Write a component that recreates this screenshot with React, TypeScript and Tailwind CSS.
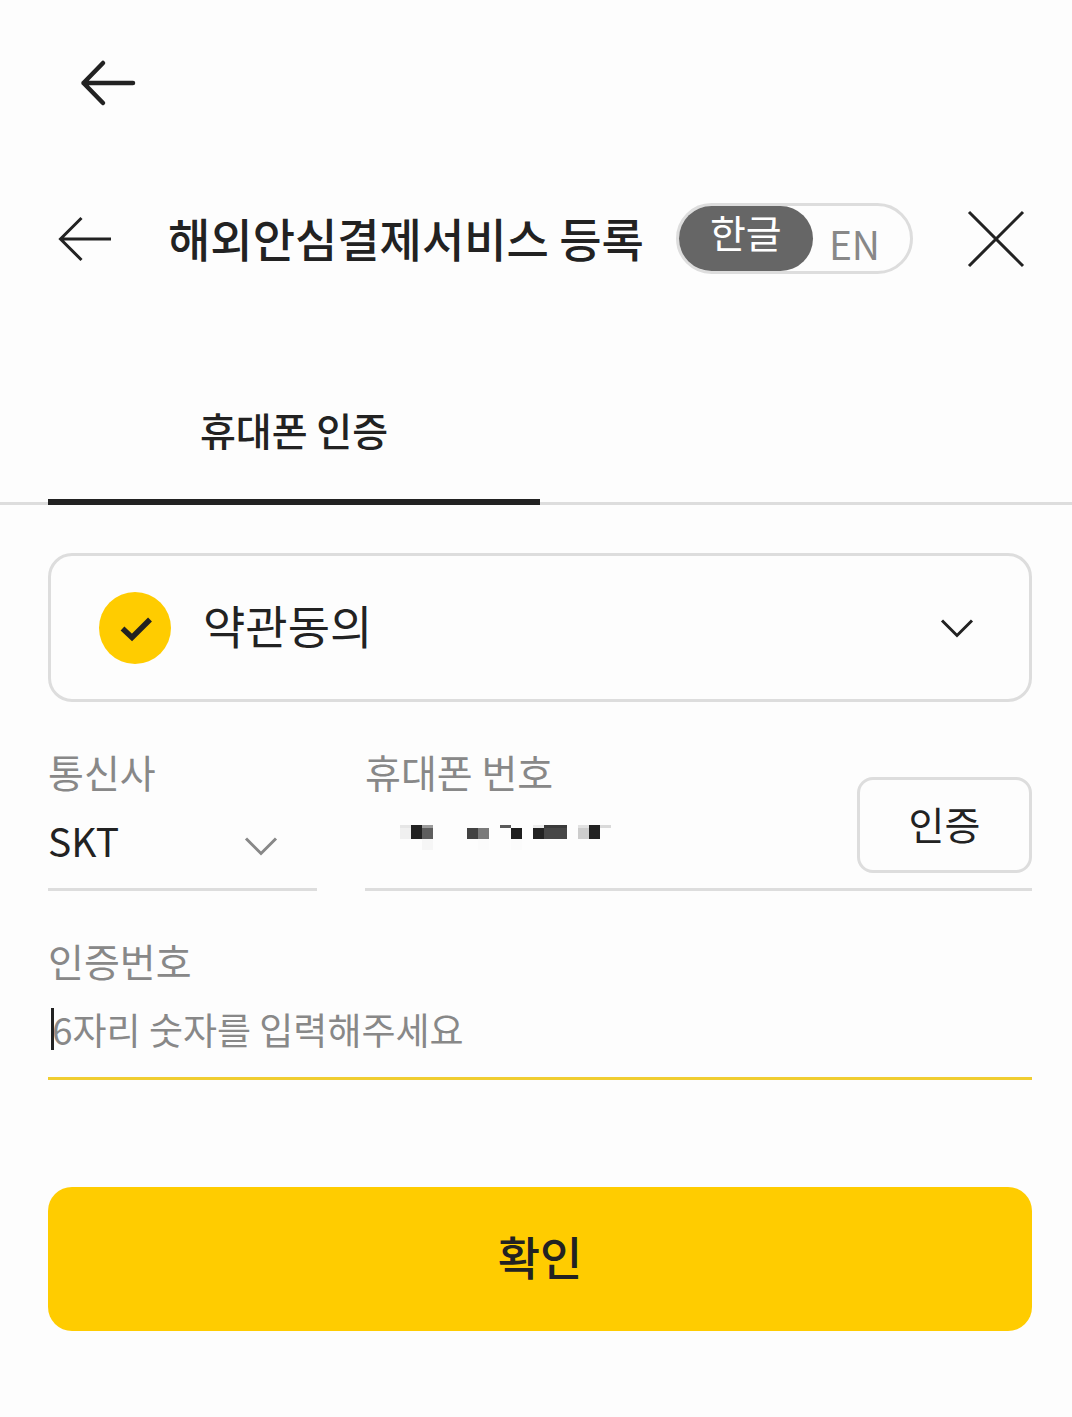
import { useState } from 'react'
import type { ReactNode } from 'react'

// hidden phone digits: x, y, width, height, colour
const MOSAIC: [number, number, number, number, string][] = [
    [0, 0, 11, 3, '#e6e6e6'],
    [0, 3, 11, 11, '#f0f0f0'],
    [11, 0, 11, 14, '#222222'],
    [22, 0, 11, 3, '#9c9c9c'],
    [22, 3, 11, 11, '#5e5e5e'],
    [22, 14, 11, 11, '#f6f6f6'],
    [67, 3, 11, 11, '#424242'],
    [78, 3, 11, 11, '#7a7a7a'],
    [78, 14, 11, 11, '#fbfbfb'],
    [100, 0, 11, 3, '#5a5a5a'],
    [111, 3, 11, 11, '#1e1e1e'],
    [111, 14, 11, 11, '#fbfbfb'],
    [133, 0, 11, 3, '#ececec'],
    [133, 3, 11, 11, '#222222'],
    [144, 0, 23, 3, '#3a3a3a'],
    [144, 3, 23, 11, '#464646'],
    [178, 0, 11, 3, '#e2e2e2'],
    [178, 3, 11, 11, '#cdcdcd'],
    [189, 0, 11, 14, '#222222'],
    [200, 0, 11, 3, '#dadada'],
]

function Chevron({ className }: { className: string }) {
    return (
        <svg viewBox="0 0 48 48" fill="none" stroke="currentColor" strokeWidth="3" className={className} aria-hidden="true">
            <path d="M9 16.5 24 31.5 39 16.5" />
        </svg>
    )
}

function Field({ id, label, children }: { id: string; label: string; children: ReactNode }) {
    return (
        <div className="relative flex flex-col w-full">
            <label htmlFor={id} className="h-12 text-[39px] leading-11 text-[#888888]">
                {label}
            </label>
            {children}
        </div>
    )
}

export default function App() {
    const [lang, setLang] = useState('ko')
    const [carrier, setCarrier] = useState('SKT')
    const [code, setCode] = useState('')

    return (
        <div className="w-full min-h-screen bg-[#fdfdfd] text-[#222222] font-['Noto_Sans_CJK_KR',sans-serif]">
            <nav className="flex items-center h-[166px] pl-19">
                <button type="button" aria-label="뒤로">
                    <svg viewBox="0 0 64 64" fill="none" stroke="currentColor" strokeWidth="4.5" strokeLinecap="round" strokeLinejoin="round" className="size-16">
                        <path d="M27 12 7.500 32 27 52M7.500 32H57" />
                    </svg>
                </button>
            </nav>

            <header className="flex items-center h-[145px] pl-14 pr-11">
                <button type="button" aria-label="이전">
                    <svg viewBox="0 0 56 56" fill="none" stroke="currentColor" strokeWidth="3" className="size-14">
                        <path d="M25.500 7 4.500 28 25.500 49M4.500 28H55" />
                    </svg>
                </button>
                <h1 className="ml-14 pb-1 text-[46px] leading-16 font-medium whitespace-nowrap">해외안심결제서비스 등록</h1>
                <div className="flex ml-8 h-[71px] w-[237px] shrink-0 rounded-full border-3 border-[#dddddd] text-[39px] leading-12">
                    <button
                        type="button"
                        aria-pressed={lang === 'ko'}
                        onClick={() => setLang('ko')}
                        className="w-[134px] rounded-full bg-[#666666] pb-4 text-white"
                    >
                        한글
                    </button>
                    <button
                        type="button"
                        aria-pressed={lang === 'en'}
                        onClick={() => setLang('en')}
                        className="px-4 pt-2 text-[#888888]"
                    >
                        EN
                    </button>
                </div>
                <button type="button" aria-label="닫기" className="ml-auto">
                    <svg viewBox="0 0 64 64" fill="none" stroke="currentColor" strokeWidth="3" className="size-16">
                        <path d="M5 5 59 59M59 5 5 59" />
                    </svg>
                </button>
            </header>

            <div role="tablist" className="flex mt-12 h-[146px] pl-12 pr-10 shadow-[inset_0_-3px_0_#dddddd]">
                <button
                    type="button"
                    role="tab"
                    aria-selected="true"
                    className="w-1/2 border-b-6 border-[#222222] text-[39px] leading-12 font-medium"
                >
                    휴대폰 인증
                </button>
            </div>

            <form className="flex flex-col gap-[47px] mt-12 pl-12 pr-10" onSubmit={(e) => e.preventDefault()}>
                <button type="button" className="flex items-center h-[149px] px-12 rounded-3xl border-3 border-[#dddddd]">
                    <svg viewBox="0 0 72 72" className="size-18" aria-hidden="true">
                        <circle cx="36" cy="36" r="36" fill="#ffcc00" />
                        <path d="M23.500 36.500 33 45.500 51 27.500" fill="none" stroke="#222222" strokeWidth="5.500" />
                    </svg>
                    <span className="ml-8 pb-2 text-[46px] leading-16">약관동의</span>
                    <Chevron className="size-12 ml-auto" />
                </button>

                <div className="grid grid-cols-[269px_1fr] gap-12">
                    <div className="border-b-3 border-[#dddddd]">
                        <Field id="carrier" label="통신사">
                            <select
                                id="carrier"
                                value={carrier}
                                onChange={(e) => setCarrier(e.target.value)}
                                className="w-full h-[91px] pb-1.5 appearance-none bg-transparent text-[39px] leading-12 outline-none"
                            >
                                <option>SKT</option>
                                <option>KT</option>
                                <option>LG U+</option>
                            </select>
                            <Chevron className="absolute right-8 bottom-[18px] size-12 text-[#888888] pointer-events-none" />
                        </Field>
                    </div>
                    <div className="flex items-end border-b-3 border-[#dddddd]">
                        <Field id="phone" label="휴대폰 번호">
                            <input id="phone" type="tel" className="w-full h-[91px] pb-1.5 bg-transparent text-[39px] outline-none" />
                            <svg viewBox="0 0 211 25" shapeRendering="crispEdges" className="absolute left-[35px] bottom-[38px] w-[211px] h-[25px] pointer-events-none" aria-hidden="true">
                                {MOSAIC.map(([x, y, w, h, fill]) => (
                                    <rect key={`${x}-${y}`} x={x} y={y} width={w} height={h} fill={fill} />
                                ))}
                            </svg>
                        </Field>
                        <button type="button" className="w-[175px] h-24 mb-[15px] pb-1 shrink-0 rounded-2xl border-3 border-[#dddddd] text-[39px] leading-12">
                            인증
                        </button>
                    </div>
                </div>

                <div className="border-b-3 border-[#f0cd30]">
                    <Field id="code" label="인증번호">
                        <input
                            id="code"
                            inputMode="numeric"
                            maxLength={6}
                            value={code}
                            onChange={(e) => setCode(e.target.value)}
                            placeholder="6자리 숫자를 입력해주세요"
                            className="w-full h-[91px] pl-1 pb-1.5 bg-transparent text-[37px] outline-none placeholder:text-[#888888]"
                        />
                        {code === '' && <span className="absolute left-[3px] bottom-[27px] w-[3px] h-[42px] bg-[#222222] pointer-events-none" />}
                    </Field>
                </div>

                <button type="submit" className="mt-15 h-36 pb-2 rounded-3xl bg-[#ffcc00] text-[46px] leading-16 font-medium">
                    확인
                </button>
            </form>
        </div>
    )
}
